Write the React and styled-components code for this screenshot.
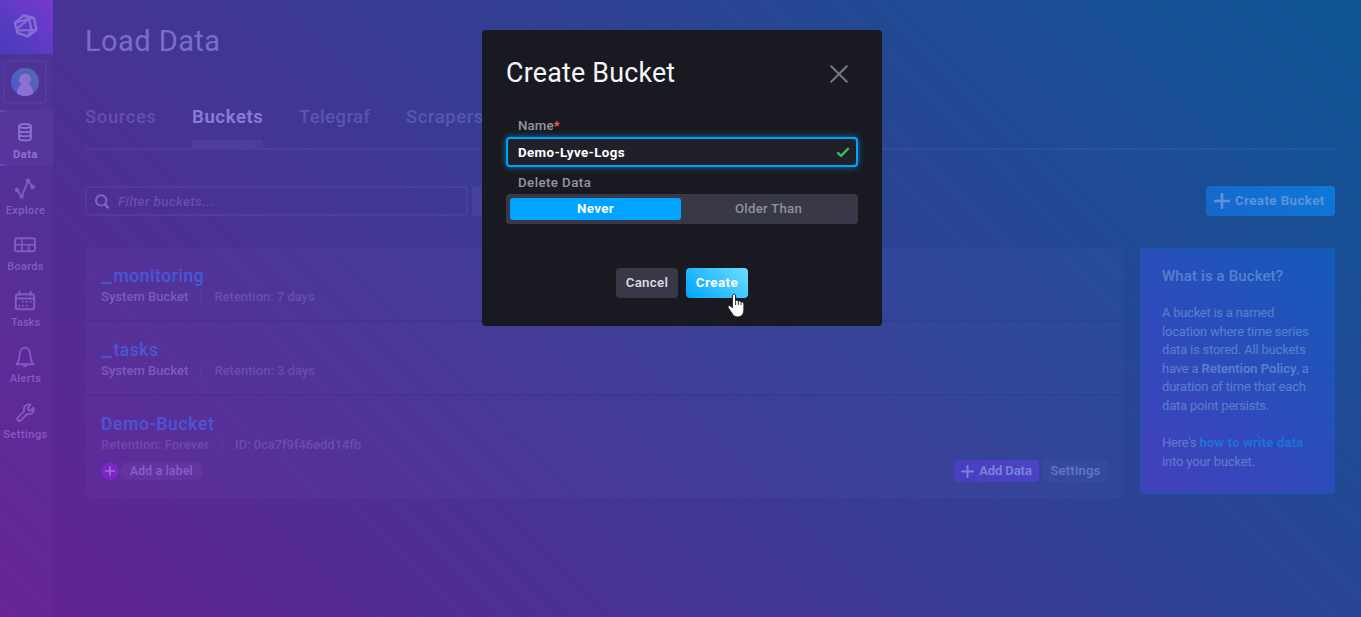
import React from "react";
import styled, { createGlobalStyle, css } from "styled-components";

const c = {
  bg: "#1b1b23",
  raised: "#292933",
  line: "#353543",
  muted: "#757888",
  soft: "#a9adb8",
  white: "#ffffff",
  pool: "#00a3ff",
};

const GlobalStyle = createGlobalStyle`
  * { box-sizing: border-box; }
  body {
    margin: 0;
    background: ${c.bg};
    font-family: Roboto, "Liberation Sans", sans-serif;
    font-size: 13px;
    font-weight: 500;
    overflow: hidden;
  }
`;

const Page = styled.div`
  display: flex;
  height: 617px;
  background: ${c.bg};
`;

/* ---------- navigation ---------- */

const Nav = styled.nav`
  flex: 0 0 53px;
  display: flex;
  flex-direction: column;
  background: #25252e;
`;

const Logo = styled.div`
  height: 54px;
  display: flex;
  justify-content: center;
  padding: 13px 2px 0 0;
  background: linear-gradient(45deg, #0846a6, #be2ee4);
`;

const UserArea = styled.div`
  height: 56px;
  padding: 6px 0 0 3px;
`;

const UserButton = styled.div`
  width: 44px;
  height: 44px;
  display: flex;
  align-items: center;
  justify-content: center;
  border: 2px solid #383845;
  border-radius: 4px;
`;

const NavItem = styled.div`
  position: relative;
  height: 56px;
  display: flex;
  flex-direction: column;
  align-items: center;
  gap: 4px;
  padding: 11px 3px 0 0;
  color: ${(p) => (p.$active ? "#eceef5" : "#b4b7c6")};
  font-size: 11px;
  line-height: 12px;
  font-weight: ${(p) => (p.$active ? 700 : 500)};
  letter-spacing: ${(p) => p.$track || 0}px;
  white-space: nowrap;

  ${(p) =>
    p.$active &&
    css`
      background: #343440;
      &::before,
      &::after {
        content: "";
        position: absolute;
        left: 0;
        width: 9px;
        height: 2px;
      }
      &::before {
        top: 0;
        background: linear-gradient(90deg, #be2ee4, transparent);
      }
      &::after {
        bottom: 0;
        background: linear-gradient(90deg, #00a3ff, transparent);
      }
    `}

  svg {
    flex: none;
    stroke: currentColor;
    stroke-width: 1.9;
    stroke-linecap: round;
    stroke-linejoin: round;
    fill: none;
  }
`;

const NavLabel = styled.span`
  padding-left: 1px;
`;

/* ---------- main area ---------- */

const Main = styled.main`
  flex: 1;
  padding: 21px 26px 0 32px;
`;

const PageTitle = styled.h1`
  margin: 0 0 33px;
  font-size: 29px;
  line-height: 40px;
  font-weight: 400;
  letter-spacing: 0.44px;
  color: #cdd0dc;
`;

const Tabs = styled.div`
  display: flex;
  gap: 36px;
  height: 56px;
  margin-bottom: 36px;
  box-shadow: inset 0 -2px 0 ${c.line};
`;

const Tab = styled.div`
  width: 71px;
  font-size: 18.5px;
  font-weight: ${(p) => (p.$active ? 600 : 500)};
  line-height: 46px;
  letter-spacing: ${(p) => p.$track}px;
  white-space: nowrap;
  color: ${(p) => (p.$active ? c.white : c.muted)};
`;

const TabBar = styled.div`
  height: 10px;
  border-radius: 2px 2px 0 0;
  background: ${c.line};
`;

const Toolbar = styled.div`
  display: flex;
  gap: 4px;
  margin-bottom: 32px;
`;

const SearchBox = styled.div`
  width: 383px;
  height: 30px;
  display: flex;
  align-items: center;
  gap: 8px;
  padding-left: 7px;
  border: 2px solid ${c.line};
  border-radius: 4px;
  font-size: 13.4px;
  font-style: italic;
  letter-spacing: 0.38px;
  color: ${c.muted};
`;

const SortMenu = styled.div`
  width: 200px;
  height: 30px;
  border-radius: 4px;
  background: ${c.line};
`;

const CreateBucketButton = styled.div`
  width: 129px;
  height: 30px;
  margin-left: auto;
  display: flex;
  align-items: center;
  gap: 5px;
  padding-left: 8px;
  border-radius: 4px;
  background: linear-gradient(45deg, #0a70e0, #00a3ff);
  color: ${c.white};
  font-size: 13.3px;
  line-height: 30px;
  font-weight: 600;
  letter-spacing: 0.45px;
  white-space: nowrap;
`;

const Columns = styled.div`
  display: flex;
  align-items: flex-start;
  gap: 16px;
`;

const BucketList = styled.div`
  width: 1039px;
  display: flex;
  flex-direction: column;
  gap: 2px;
`;

const Card = styled.div`
  height: ${(p) => p.$height || 72}px;
  padding: 17px 16px 0;
  border-radius: 4px;
  background: ${c.raised};
`;

const BucketName = styled.div`
  font-size: 17.5px;
  line-height: 22px;
  letter-spacing: ${(p) => p.$track}px;
  color: ${c.pool};
`;

const Lead = styled.span`
  display: inline-block;
  width: 12.5px;
  &::before {
    content: "_";
    display: inline-block;
    transform: scaleX(1.4);
    transform-origin: left;
  }
`;

const Meta = styled.div`
  display: flex;
  align-items: center;
  gap: 12px;
  line-height: 20px;
  letter-spacing: ${(p) => p.$track || 0}px;
  font-weight: 500;
  color: #747787;
  white-space: nowrap;
`;

const MetaStrong = styled.span`
  font-weight: 500;
  letter-spacing: 0.04px;
  color: ${c.soft};
`;

const MetaId = styled.span`
  letter-spacing: -0.05px;
`;

const Divider = styled.span`
  width: 2px;
  height: 14px;
  background: #363643;
`;

const CardFooter = styled.div`
  display: flex;
  align-items: center;
  gap: 1px;
  height: 22px;
  margin-top: 5px;
`;

const LabelAdd = styled.div`
  width: 18px;
  height: 18px;
  display: flex;
  align-items: center;
  justify-content: center;
  border-radius: 50%;
  background: #8c16cc;
`;

const LabelPill = styled.div`
  width: 83px;
  height: 18px;
  border-radius: 9px;
  background: #414152;
  color: #c2c5d2;
  font-size: 12px;
  line-height: 18px;
  text-align: center;
  letter-spacing: 0.3px;
`;

const SmallButton = styled.div`
  width: ${(p) => p.$width}px;
  height: 22px;
  display: flex;
  align-items: center;
  justify-content: center;
  gap: 5px;
  border-radius: 4px;
  line-height: 22px;
  background: ${(p) => (p.$accent ? "linear-gradient(45deg, #6518b4, #7b22cc)" : "#353543")};
  color: ${(p) => (p.$accent ? c.white : "#c6cad3")};
  letter-spacing: ${(p) => (p.$accent ? -0.1 : 0.25)}px;
  font-weight: ${(p) => (p.$accent ? 600 : 500)};
  white-space: nowrap;
`;

const ButtonText = styled.span`
  padding-bottom: 1px;
`;

const FooterActions = styled.div`
  margin-left: auto;
  display: flex;
  gap: 4px;
`;

const InfoPanel = styled.aside`
  width: 195px;
  height: 246px;
  padding: 16px 0 0 20px;
  border: 2px solid #0844a0;
  border-radius: 4px;
  background: linear-gradient(45deg, #6a10a6, #0d40a4);
  color: #c8cedc;
  font-weight: 400;
  white-space: nowrap;
`;

const InfoTitle = styled.div`
  font-size: 15px;
  line-height: 20px;
  font-weight: 500;
  letter-spacing: 0.12px;
  margin-bottom: 18px;
`;

const InfoLine = styled.div`
  line-height: 18.6px;
  letter-spacing: ${(p) => p.$track ?? -0.2}px;
  margin-top: ${(p) => (p.$spaced ? 18.6 : 0)}px;
`;

const InfoStrong = styled.span`
  font-weight: 600;
  letter-spacing: 0;
`;

const InfoLink = styled.span`
  font-weight: 700;
  letter-spacing: 0.22px;
  color: ${c.pool};
`;

/* ---------- overlay ---------- */

const Mask = styled.div`
  position: fixed;
  inset: 0;
  background: linear-gradient(45deg, #8424c3, #066fc5);
  opacity: 0.7;
`;

const OverlayLayer = styled.div`
  position: fixed;
  inset: 0;
  display: flex;
  align-items: flex-start;
  justify-content: center;
  padding: 30px 0 0 3px;
`;

const Dialog = styled.section`
  width: 400px;
  height: 296px;
  padding: 0 24px;
  border-radius: 4px;
  background: #191a21;
`;

const DialogHeader = styled.header`
  display: flex;
  align-items: center;
  justify-content: space-between;
  height: 88px;
  padding-right: 10px;
`;

const DialogTitle = styled.div`
  padding-bottom: 2px;
  font-size: 26.8px;
  font-weight: 400;
  letter-spacing: 0.22px;
  color: #f6f6f8;
`;

const FieldLabel = styled.div`
  line-height: 16px;
  padding-left: 12px;
  margin: ${(p) => p.$top || 0}px 0 3px;
  font-size: 13.3px;
  letter-spacing: ${(p) => p.$track}px;
  color: #9395a3;
`;

const Required = styled.span`
  color: #f95f53;
`;

const NameInput = styled.div`
  height: 30px;
  display: flex;
  align-items: center;
  justify-content: space-between;
  padding: 0 6px 0 10px;
  border: 2px solid ${c.pool};
  border-radius: 4px;
  background: #202028;
  box-shadow: 0 0 6px rgba(0, 163, 255, 0.7);
  color: ${c.white};
  font-size: 13.3px;
  font-weight: 700;
  letter-spacing: 0.4px;
`;

const Toggle = styled.div`
  display: flex;
  height: 30px;
  padding: 4px;
  border-radius: 4px;
  background: #383846;
`;

const ToggleOption = styled.div`
  width: ${(p) => p.$width}px;
  border-radius: 3px;
  line-height: 22px;
  text-align: center;
  padding-left: ${(p) => (p.$active ? 0 : 2)}px;
  background: ${(p) => (p.$active ? c.pool : "transparent")};
  color: ${(p) => (p.$active ? c.white : "#8e90a0")};
  font-size: 13.3px;
  font-weight: ${(p) => (p.$active ? 700 : 500)};
  letter-spacing: ${(p) => (p.$active ? 0.35 : 0.22)}px;
`;

const DialogActions = styled.div`
  display: flex;
  justify-content: center;
  gap: 8px;
  margin-top: 44px;
`;

const DialogButton = styled.div`
  position: relative;
  width: 62px;
  height: 30px;
  border-radius: 4px;
  line-height: 30px;
  text-align: center;
  background: ${(p) => (p.$primary ? "linear-gradient(45deg, #00a3ff, #6bdfff)" : "#383846")};
  color: ${(p) => (p.$primary ? c.white : "#d8dae2")};
  font-size: 13.3px;
  font-weight: ${(p) => (p.$primary ? 700 : 600)};
  letter-spacing: ${(p) => (p.$primary ? 0.48 : 0.3)}px;
`;

const Pointer = styled.svg`
  position: absolute;
  left: 41px;
  top: 25px;
`;

/* ---------- drawings ---------- */

const LogoMark = () => (
  <svg width="26" height="26" viewBox="0 0 26 26" fill="none" stroke="#e4e4f0" strokeWidth="2" strokeLinejoin="round">
    <path d="M10.6 2.4 L21 4.9 L23.4 16.9 L14.8 23.4 L4.4 19.8 L1.9 9.8 Z" strokeWidth="2.3" />
    <path d="M1.9 9.8 L16 6 L21 4.9 M10.6 2.4 L16 6 L18.6 17 L23.4 16.9 M16 6 L4 15.6 M4.4 17.4 L18.6 17 L14.8 23.4" />
  </svg>
);

const Avatar = () => (
  <svg width="28" height="28" viewBox="0 0 28 28">
    <defs>
      <linearGradient id="avatar" x1="0" y1="0.75" x2="0.6" y2="0.1">
        <stop offset="0" stopColor="#00a0f4" />
        <stop offset="1" stopColor="#44c890" />
      </linearGradient>
      <clipPath id="avatarClip">
        <circle cx="14" cy="14" r="14" />
      </clipPath>
    </defs>
    <circle cx="14" cy="14" r="14" fill="url(#avatar)" />
    <g clipPath="url(#avatarClip)" fill="#eeeef6">
      <circle cx="14" cy="11.4" r="6" />
      <path d="M5.8 28 C5.6 20.5 8.6 16.4 11 16.2 H17 C19.6 16.4 22.5 20.5 22.2 28 Z" />
    </g>
  </svg>
);

const DataIcon = () => (
  <svg width="24" height="24" viewBox="0 0 24 24">
    <ellipse cx="12" cy="5" rx="5.9" ry="2" />
    <path d="M6.1 5 V17.4 C6.1 20.2 17.9 20.2 17.9 17.4 V5 M6.1 9.2 C6.1 11.8 17.9 11.8 17.9 9.2 M6.1 13.3 C6.1 15.9 17.9 15.9 17.9 13.3" />
  </svg>
);

const ExploreIcon = () => (
  <svg width="24" height="24" viewBox="0 0 24 24">
    <path d="M4 13 L8.7 19.5 L15 3.8 L19.6 10" />
    <g fill="currentColor" stroke="none">
      <circle cx="4" cy="13" r="2.2" />
      <circle cx="8.7" cy="19.5" r="2.2" />
      <circle cx="15" cy="3.8" r="2.2" />
      <circle cx="19.6" cy="10" r="2.2" />
    </g>
  </svg>
);

const BoardsIcon = () => (
  <svg width="24" height="24" viewBox="0 0 24 24">
    <rect x="2.1" y="5.3" width="19.8" height="13" rx="1.8" />
    <path d="M2.1 11.8 H21.9 M8.8 5.3 V18.3 M15.6 11.8 V18.3" strokeWidth="1.6" />
  </svg>
);

const TasksIcon = () => (
  <svg width="24" height="24" viewBox="0 0 24 24">
    <rect x="2.8" y="5.2" width="18.4" height="15" rx="2" />
    <path d="M2.8 9.5 H21.2 M6.4 2.6 V6.2 M17.6 2.6 V6.2" />
    <g fill="currentColor" stroke="none">
      {[[9.6, 12.8], [13.6, 12.8], [17.6, 12.8], [6.2, 16.8], [10, 16.8], [13.8, 16.8]].map(([x, y]) => (
        <circle key={`${x}-${y}`} cx={x} cy={y} r="1" />
      ))}
    </g>
  </svg>
);

const AlertsIcon = () => (
  <svg width="24" height="24" viewBox="0 0 24 24">
    <path d="M3.4 19.2 C6.4 16.4 6.4 13.5 6.7 9.4 C7 5.4 9.2 2.6 12 2.6 C14.8 2.6 17 5.4 17.3 9.4 C17.6 13.5 17.6 16.4 20.6 19.2 Z" />
    <path d="M10.2 19.8 C10.6 21.4 13.4 21.4 13.8 19.8 Z" fill="currentColor" />
  </svg>
);

const WrenchIcon = () => (
  <svg width="24" height="24" viewBox="0 0 24 24">
    <path d="M15 6.9 a0.9 0.9 0 0 0 0 1.3 l1.3 1.3 a0.9 0.9 0 0 0 1.3 0 l2.9 -2.9 a5 5 0 0 1 -6.4 6.4 l-6.6 6.6 a2.1 2.1 0 0 1 -2.9 -2.9 l6.6 -6.6 a5 5 0 0 1 6.4 -6.4 z" />
  </svg>
);

const Plus = ({ size, weight, color = "#ffffff" }) => (
  <svg width={size} height={size} viewBox="0 0 16 16" stroke={color} strokeWidth={weight} strokeLinecap="round">
    <path d="M8 1.2 V14.8 M1.2 8 H14.8" />
  </svg>
);

const SearchIcon = () => (
  <svg width="16" height="16" viewBox="0 0 16 16" fill="none" stroke="#c6c9d6" strokeWidth="1.9" strokeLinecap="round">
    <circle cx="7.2" cy="7.4" r="5.2" />
    <path d="M11.2 11.6 L13.8 14.4" strokeWidth="2.5" />
  </svg>
);

const navItems = [
  { label: "Data", Icon: DataIcon, active: true, track: 0.6 },
  { label: "Explore", Icon: ExploreIcon, track: 0.44 },
  { label: "Boards", Icon: BoardsIcon, track: 0.32 },
  { label: "Tasks", Icon: TasksIcon, track: 0.05 },
  { label: "Alerts", Icon: AlertsIcon, track: 0.37 },
  { label: "Settings", Icon: WrenchIcon, track: 0.48 },
];

const tabs = [
  { label: "Sources", track: 0.6 },
  { label: "Buckets", track: 0.65, active: true },
  { label: "Telegraf", track: 0.4 },
  { label: "Scrapers", track: 0.56 },
];

export default function App() {
  return (
    <>
      <GlobalStyle />
      <Page>
        <Nav>
          <Logo>
            <LogoMark />
          </Logo>
          <UserArea>
            <UserButton>
              <Avatar />
            </UserButton>
          </UserArea>
          {navItems.map(({ label, Icon, active, track }) => (
            <NavItem key={label} $active={active} $track={track}>
              <Icon />
              <NavLabel>{label}</NavLabel>
            </NavItem>
          ))}
        </Nav>
        <Main>
          <PageTitle>Load Data</PageTitle>
          <Tabs>
            {tabs.map((t) => (
              <Tab key={t.label} $active={t.active} $track={t.track}>
                {t.label}
                {t.active && <TabBar />}
              </Tab>
            ))}
          </Tabs>
          <Toolbar>
            <SearchBox>
              <SearchIcon />
              Filter buckets...
            </SearchBox>
            <SortMenu />
            <CreateBucketButton>
              <Plus size={16} weight={2.7} />
              <ButtonText>Create Bucket</ButtonText>
            </CreateBucketButton>
          </Toolbar>
          <Columns>
            <BucketList>
              <Card>
                <BucketName $track={0.56}>
                  <Lead />
                  monitoring
                </BucketName>
                <Meta $track={-0.02}>
                  <MetaStrong>System Bucket</MetaStrong>
                  <Divider />
                  <span>Retention: 7 days</span>
                </Meta>
              </Card>
              <Card>
                <BucketName $track={0.5}>
                  <Lead />
                  tasks
                </BucketName>
                <Meta $track={0}>
                  <MetaStrong>System Bucket</MetaStrong>
                  <Divider />
                  <span>Retention: 3 days</span>
                </Meta>
              </Card>
              <Card $height={102}>
                <BucketName $track={0.68}>Demo-Bucket</BucketName>
                <Meta $track={0.1}>
                  <span>Retention: Forever</span>
                  <Divider />
                  <MetaId>ID: 0ca7f9f46edd14fb</MetaId>
                </Meta>
                <CardFooter>
                  <LabelAdd>
                    <Plus size={10} weight={2.6} />
                  </LabelAdd>
                  <LabelPill>Add a label</LabelPill>
                  <FooterActions>
                    <SmallButton $width={85} $accent>
                      <Plus size={13} weight={2.4} />
                      <ButtonText>Add Data</ButtonText>
                    </SmallButton>
                    <SmallButton $width={65}>
                      <ButtonText>Settings</ButtonText>
                    </SmallButton>
                  </FooterActions>
                </CardFooter>
              </Card>
            </BucketList>
            <InfoPanel>
              <InfoTitle>What is a Bucket?</InfoTitle>
              <InfoLine $track={-0.27}>A bucket is a named</InfoLine>
              <InfoLine>location where time series</InfoLine>
              <InfoLine>data is stored. All buckets</InfoLine>
              <InfoLine>
                have a <InfoStrong>Retention Policy</InfoStrong>, a
              </InfoLine>
              <InfoLine>duration of time that each</InfoLine>
              <InfoLine>data point persists.</InfoLine>
              <InfoLine $spaced>
                Here's <InfoLink>how to write data</InfoLink>
              </InfoLine>
              <InfoLine $track={-0.16}>into your bucket.</InfoLine>
            </InfoPanel>
          </Columns>
        </Main>
      </Page>
      <Mask />
      <OverlayLayer>
        <Dialog>
          <DialogHeader>
            <DialogTitle>Create Bucket</DialogTitle>
            <svg width="18" height="18" viewBox="0 0 18 18" stroke="#757888" strokeWidth="2" strokeLinecap="round">
              <path d="M1.2 1.2 L16.8 16.8 M16.8 1.2 L1.2 16.8" />
            </svg>
          </DialogHeader>
          <FieldLabel $track={0.1}>
            Name<Required>*</Required>
          </FieldLabel>
          <NameInput>
            Demo-Lyve-Logs
            <svg width="14" height="12" viewBox="0 0 14 12" fill="none" stroke="#34bb55" strokeWidth="2.4" strokeLinecap="round" strokeLinejoin="round">
              <path d="M2 7 L5 9.8 L12 2.8" />
            </svg>
          </NameInput>
          <FieldLabel $top={8} $track={0.42}>
            Delete Data
          </FieldLabel>
          <Toggle>
            <ToggleOption $width={171} $active>
              Never
            </ToggleOption>
            <ToggleOption $width={173}>Older Than</ToggleOption>
          </Toggle>
          <DialogActions>
            <DialogButton>Cancel</DialogButton>
            <DialogButton $primary>
              Create
              <Pointer width="20" height="26" viewBox="0 0 20 26">
                <path
                  d="M5.4 3 C5.4 0.6 8.6 0.6 8.6 3 V8 C9.4 6.9 11 7.2 11.3 8.4 C12.3 7.5 13.8 7.9 14 9.2 C15.1 8.6 16.9 9.2 16.9 11 V16.6 C16.9 20.8 14.6 24 10.8 24 C7.6 24 6.3 22.4 4.8 20 L1.2 14.8 C0.4 13 2.6 11.8 3.9 13.2 L5.4 14.8 Z"
                  fill="#ffffff"
                  stroke="#1b1c24"
                  strokeWidth="1"
                />
                <path d="M8.6 8.4 V12 M11.3 8.8 V12 M14 9.6 V12" stroke="#1b1c24" strokeWidth="0.9" />
              </Pointer>
            </DialogButton>
          </DialogActions>
        </Dialog>
      </OverlayLayer>
    </>
  );
}
